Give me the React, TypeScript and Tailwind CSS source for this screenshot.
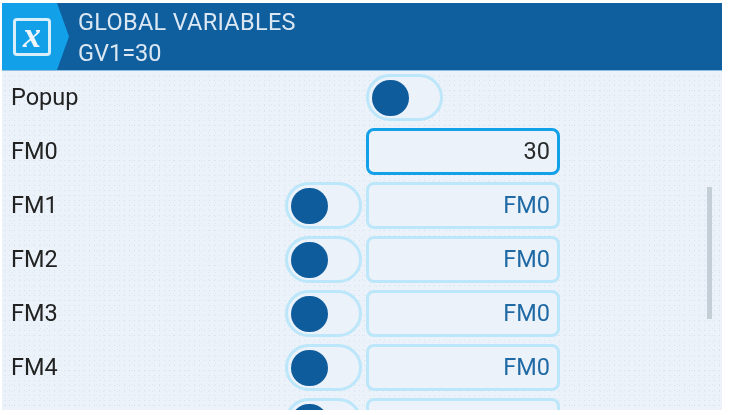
const rows = ["FM1", "FM2", "FM3", "FM4", ""];

function Toggle() {
  return (
    <div className="flex h-[47px] w-[77px] shrink-0 items-center rounded-full border-[3px] border-[#bce6f9] bg-[#ebf2f9] pl-[3px]">
      <div className="h-[36px] w-[37px] rounded-full bg-[#0f5c9d]" />
    </div>
  );
}

function Field({ value, active }: { value: string; active?: boolean }) {
  return (
    <div
      className={
        active
          ? "flex h-[47px] w-[194px] shrink-0 items-center justify-end rounded-[8px] border-[3px] border-[#12a0e8] bg-[#ebf2f9] pr-[7px] text-[#2a2a2a]"
          : "flex h-[47px] w-[194px] shrink-0 items-center justify-end rounded-[8px] border-[3px] border-[#bce6f9] bg-[#ebf2f9] pr-[7px] text-[#1f69a5]"
      }
    >
      {value}
    </div>
  );
}

export default function App() {
  return (
    <div className="h-[415px] w-[730px] overflow-hidden bg-white px-[2px] pb-[5px] pt-[3px] font-['Roboto',sans-serif] text-[23.5px] leading-none">
      <div className="relative flex h-[407px] w-[720px] flex-col overflow-hidden bg-[#ebf2f9] bg-[radial-gradient(#d9e1ea_0.7px,transparent_0.9px),radial-gradient(#dde5ee_0.7px,transparent_0.9px)] bg-[length:5px_5px,7px_7px] blur-[0.35px]">
        <header className="flex h-[67px] shrink-0 items-stretch bg-[#0f5e9e]">
          <div className="flex w-[67px] items-center bg-[#12a0e8] pl-[11px] [clip-path:polygon(0_0,55px_0,67px_50%,55px_100%,0_100%)]">
            <div className="flex h-[38px] w-[38px] items-center justify-center rounded-[4px] border-[3px] border-[#d9eefb] font-['Liberation_Serif',serif] text-[36px] font-bold italic text-[#eef6fc]">
              <span className="-translate-y-[2px]">x</span>
            </div>
          </div>
          <div className="ml-[9px] flex flex-col gap-[7px] pt-[8px] text-[#dbe8f3]">
            <div className="tracking-[0.3px]">GLOBAL VARIABLES</div>
            <div>GV1=30</div>
          </div>
        </header>
        <div className="h-[1px] shrink-0 bg-[#8fbde0]" />

        <div className="flex flex-col gap-[7px] pl-[9px] pt-[3px] text-[#222]">
          <div className="flex items-center">
            <div className="w-[355px]">Popup</div>
            <Toggle />
          </div>
          <div className="flex items-center">
            <div className="w-[355px]">FM0</div>
            <Field value="30" active />
          </div>
          {rows.map((name, i) => (
            <div key={i} className="flex items-center">
              <div className="w-[274px]">{name}</div>
              <Toggle />
              <div className="w-[4px]" />
              <Field value={name ? "FM0" : ""} />
            </div>
          ))}
        </div>

        <div className="absolute left-[705px] top-[184px] h-[132px] w-[5px] bg-[#c3ced7]" />
      </div>
    </div>
  );
}
